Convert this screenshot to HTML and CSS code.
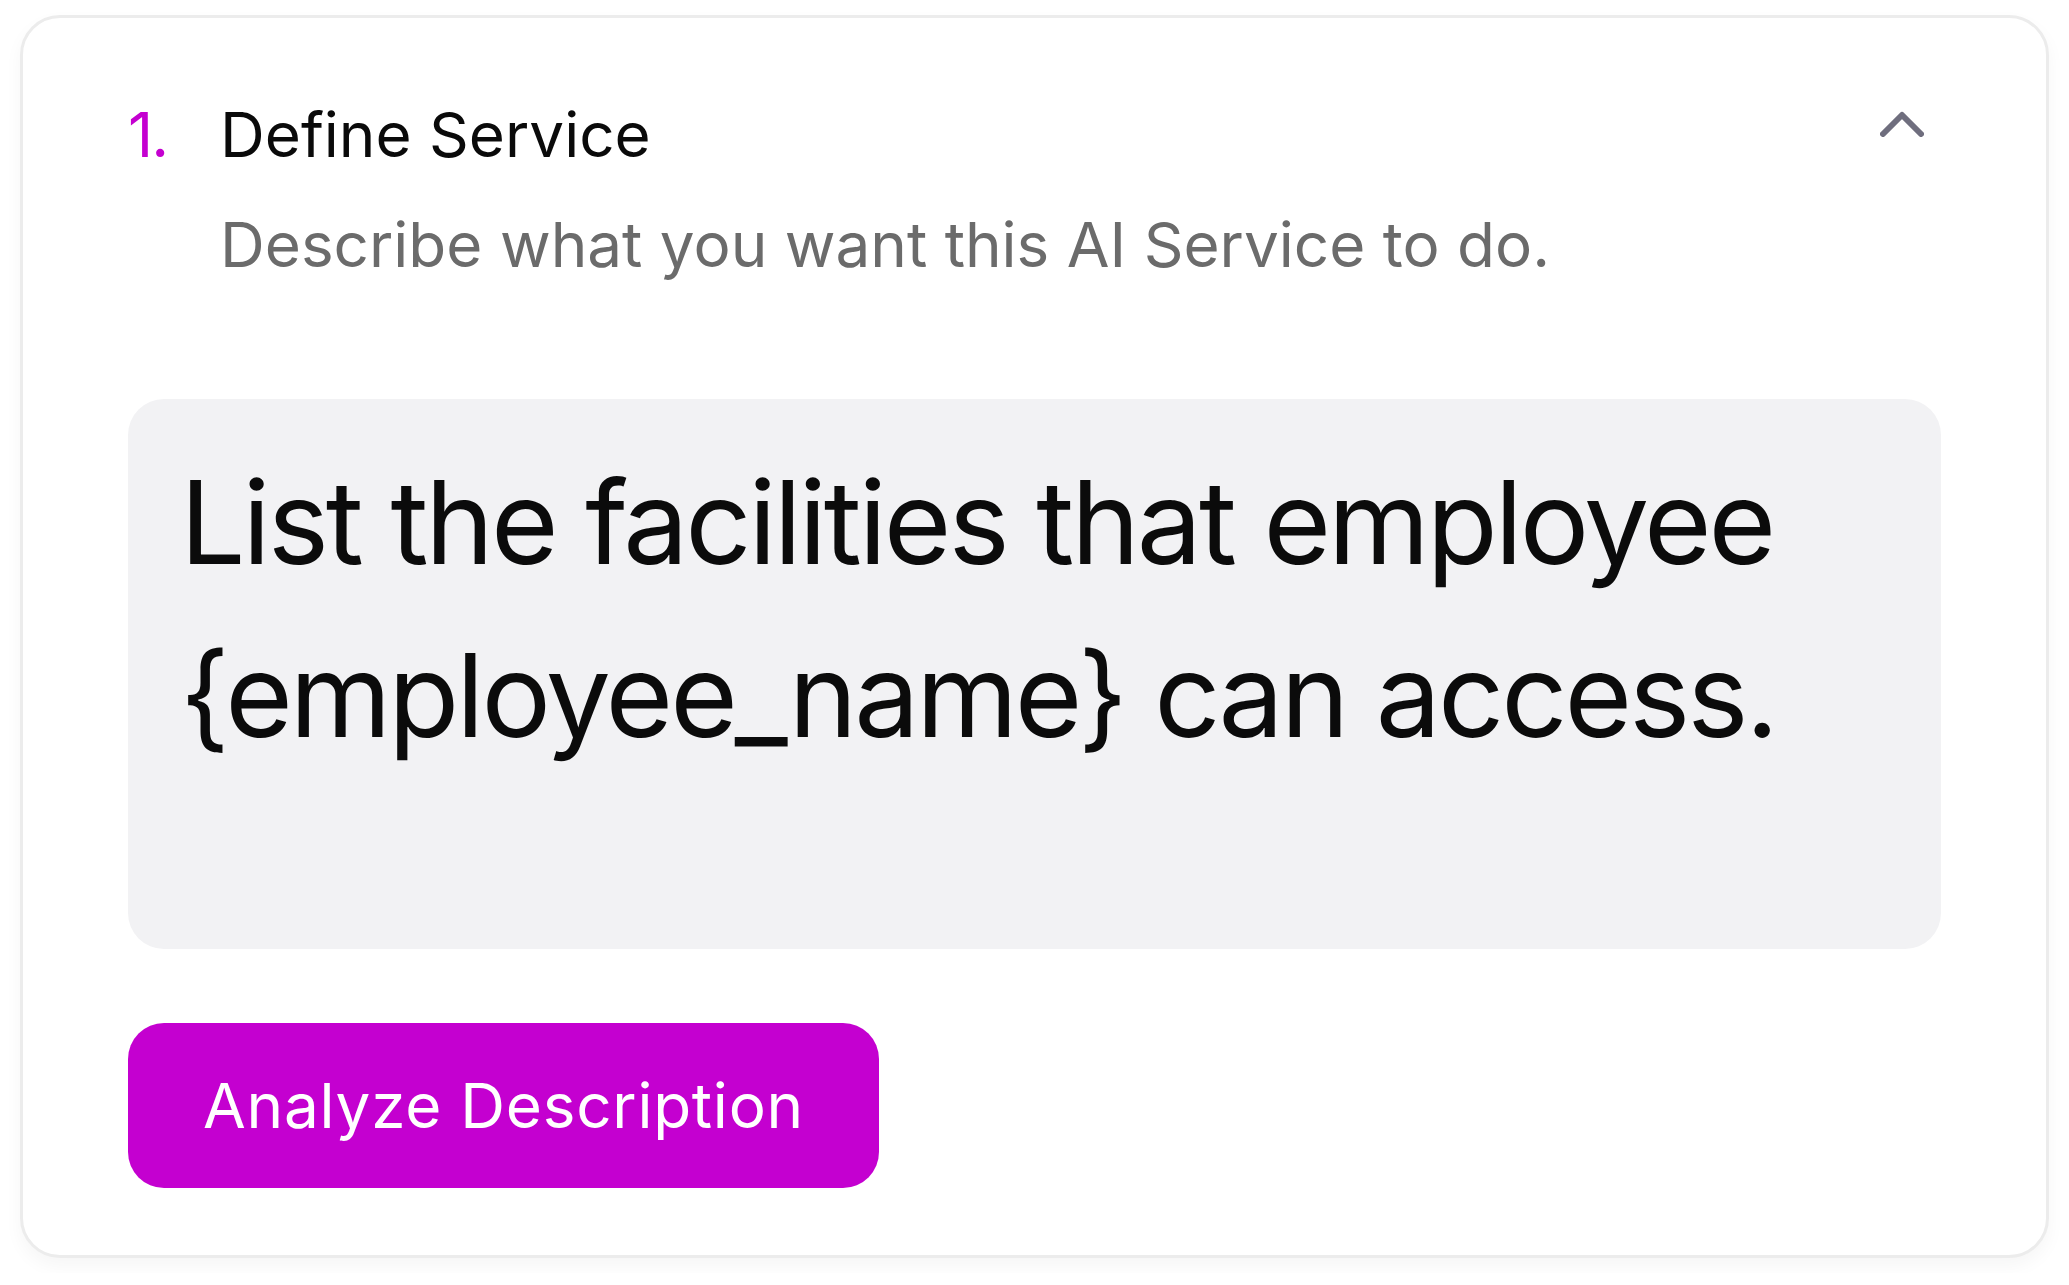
FILE: index.html
```html
<!DOCTYPE html>
<html lang="en">
<head>
    <meta charset="UTF-8">
    <meta name="viewport" content="width=device-width, initial-scale=1.0">
    <title>Define Service</title>
    <link rel="stylesheet" href="styles.css">
</head>
<body>
    <div class="step-card">
        <div class="step-header">
            <span class="step-number">1.</span>
            <div class="step-titles">
                <h2>Define Service</h2>
                <p class="step-desc">Describe what you want this AI Service to do.</p>
            </div>
            <button class="collapse-btn" type="button" aria-label="Collapse">
                <svg width="44" height="26" viewBox="0 0 44 26">
                    <path d="M3 23 L22 4 L41 23" fill="none" stroke="#6f6e7e" stroke-width="6" stroke-linecap="round" stroke-linejoin="round"/>
                </svg>
            </button>
        </div>

        <textarea class="prompt-box" id="description" readonly>List the facilities that employee {employee_name} can access.</textarea>

        <button class="analyze-btn" type="submit">Analyze Description</button>
    </div>
</body>
</html>
```

FILE: styles.css
```css
body {
    margin: 0;
    padding: 15px 20px;
    font-family: Inter, "Noto Sans", sans-serif;
    background: #ffffff;
}
.step-card {
    border: 3px solid #ececec;
    border-radius: 40px;
    padding: 73px 105px 67px;
    box-shadow: 0 8px 18px rgba(0, 0, 0, 0.04);
    background: #ffffff;
}
.step-header {
    display: flex;
    align-items: flex-start;
}
.step-number {
    width: 92px;
    flex-shrink: 0;
    font-size: 62px;
    line-height: 87px;
    color: #c400d0;
    letter-spacing: -0.03em;
}
.step-titles {
    flex: 1;
}
.step-titles h2 {
    margin: 0;
    font-size: 62px;
    line-height: 87px;
    font-weight: 400;
    color: #0a0a0a;
}
.step-desc {
    margin: 23px 0 0;
    font-size: 62px;
    line-height: 87px;
    color: #6b6b6b;
}
.collapse-btn {
    margin: 20px 17px 0 0;
    padding: 0;
    border: none;
    background: none;
    line-height: 0;
    cursor: pointer;
}
.prompt-box {
    display: block;
    box-sizing: border-box;
    width: 100%;
    height: 550px;
    margin-top: 111px;
    padding: 37px 52px;
    border: none;
    border-radius: 36px;
    background: #f2f2f4;
    font-family: Inter, "Noto Sans", sans-serif;
    font-size: 116px;
    line-height: 173px;
    letter-spacing: -0.026em;
    color: #0b0b0b;
    resize: none;
    overflow: hidden;
    outline: none;
}
.analyze-btn {
    display: block;
    width: 751px;
    height: 165px;
    margin-top: 74px;
    border: none;
    border-radius: 36px;
    background: #c400d0;
    color: #ffffff;
    font-family: Inter, "Noto Sans", sans-serif;
    font-size: 62px;
    letter-spacing: 0.012em;
    cursor: pointer;
}
```
